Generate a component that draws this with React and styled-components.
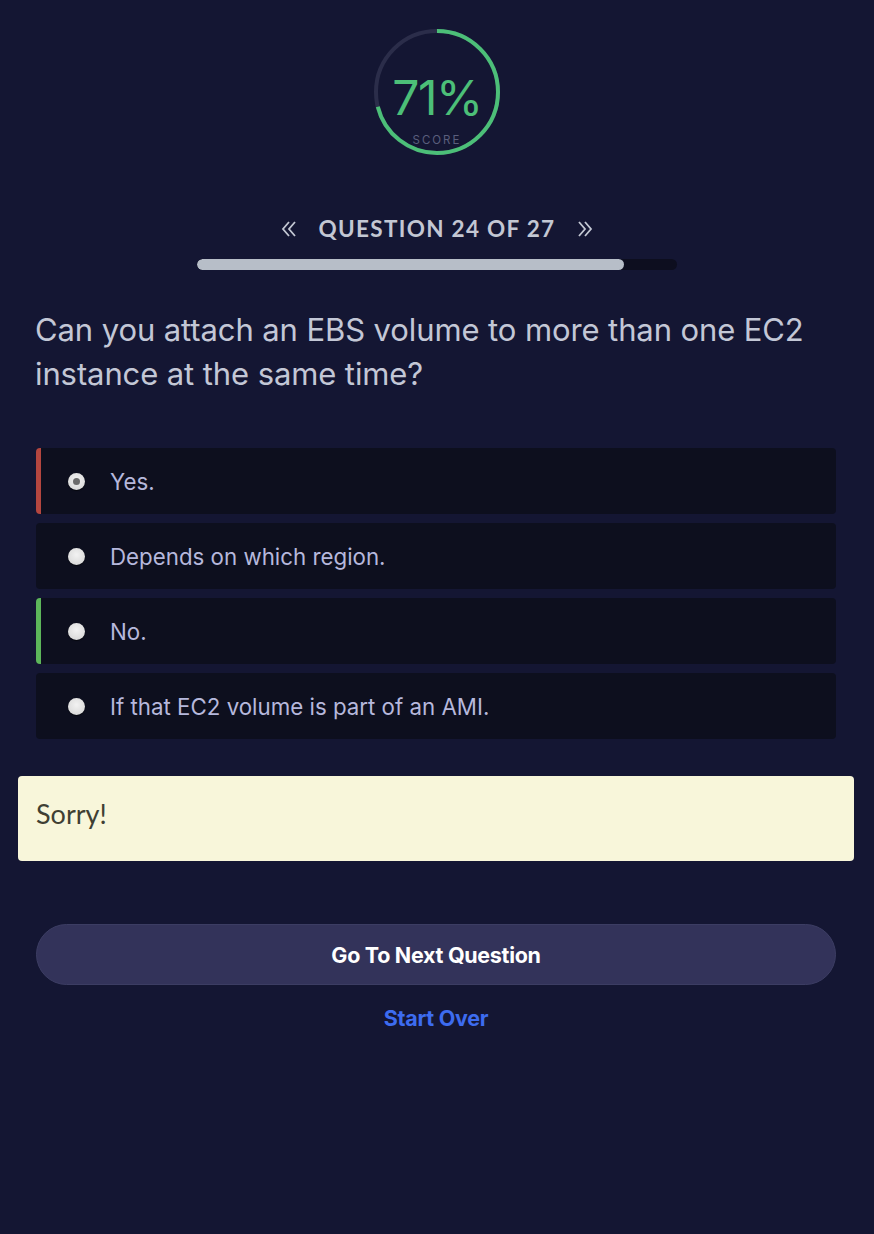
import * as React from 'react';
import styled, { createGlobalStyle } from 'styled-components';

const Global = createGlobalStyle`
  html, body {
    margin: 0;
    padding: 0;
    background: #141633;
  }
`

const Page = styled.div`
  min-height: 1234px;
  background: #141633;
  font-family: Inter, 'Liberation Sans', sans-serif;
  display: flex;
  flex-direction: column;
  align-items: center;
  padding-top: 29px;
  box-sizing: border-box;
`

const Dial = styled.div`
  position: relative;
  width: 126px;
  height: 126px;
`

const DialText = styled.div`
  position: absolute;
  inset: 0;
  display: flex;
  flex-direction: column;
  align-items: center;
  justify-content: center;
`

const Percent = styled.div`
  color: #4cbf78;
  font-family: Inter, 'Liberation Sans', sans-serif;
  font-size: 48px;
  font-weight: 400;
  line-height: 1;
  margin-top: 36px;
  letter-spacing: -1.5px;
`

const ScoreLabel = styled.div`
  color: #5a5e7c;
  font-size: 11.5px;
  letter-spacing: 2px;
  margin-top: 11px;
`

const NavRow = styled.div`
  display: flex;
  align-items: center;
  gap: 22px;
  margin-top: 60px;
  color: #c3c7d3;
`

const NavTitle = styled.div`
  font-family: 'Lato', sans-serif;
  font-weight: 700;
  font-size: 22.5px;
  letter-spacing: 1.3px;
`

const Track = styled.div`
  width: 480px;
  height: 11px;
  border-radius: 6px;
  background: #0d0e1f;
  margin-top: 17px;
  overflow: hidden;
`

const Fill = styled.div`
  height: 100%;
  border-radius: 6px;
  background: #b7bec8;
`

const Body = styled.div`
  align-self: stretch;
  padding: 0 38px 0 36px;
  margin-top: 38px;
`

const Question = styled.h1`
  margin: 0 0 52px -1px;
  font-family: Inter, 'Liberation Sans', sans-serif;
  font-weight: 400;
  font-size: 31px;
  line-height: 44px;
  letter-spacing: -0.1px;
  color: #c3c7d6;
`

const Options = styled.div`
  display: flex;
  flex-direction: column;
  gap: 9px;
`

const Option = styled.div`
  display: flex;
  align-items: center;
  height: 66px;
  background: #0d0f1e;
  border-radius: 4px;
  border-left: 5px solid ${p => p.mark || '#0d0f1e'};
  padding-left: 27px;
  gap: 25px;
  box-sizing: border-box;
`

const Radio = styled.span`
  width: 17px;
  height: 17px;
  flex-shrink: 0;
  border-radius: 50%;
  background: radial-gradient(circle at 50% 40%, #f2f2f2 0%, #dcdcdc 70%, #b5b5b5 100%);
  box-shadow: 0 1px 1px rgba(0,0,0,0.6);
  display: flex;
  align-items: center;
  justify-content: center;
  &::after {
    content: '';
    width: 7px;
    height: 7px;
    border-radius: 50%;
    background: ${p => (p.checked ? '#6b6b6b' : 'transparent')};
  }
`

const OptionText = styled.span`
  font-size: 22.3px;
  color: #b6b8dc;
`

const Alert = styled.div`
  margin: 37px 20px 0 18px;
  background: #f8f6da;
  border-radius: 4px;
  height: 85px;
  box-sizing: border-box;
  padding: 21px 18px;
  font-family: 'Lato', sans-serif;
  font-size: 27px;
  color: #403f33;
  align-self: stretch;
`

const Actions = styled.div`
  align-self: stretch;
  padding: 0 38px 0 36px;
  margin-top: 63px;
  display: flex;
  flex-direction: column;
  align-items: center;
`

const NextButton = styled.button`
  width: 100%;
  height: 61px;
  border-radius: 31px;
  background: #33335a;
  border: 1px solid #3c3d63;
  color: #ffffff;
  font-family: Inter, 'Liberation Sans', sans-serif;
  font-weight: 700;
  font-size: 21.5px;
  letter-spacing: -0.3px;
`

const StartOver = styled.a`
  margin-top: 20px;
  color: #3d6cf0;
  font-weight: 700;
  font-size: 21.5px;
  letter-spacing: -0.3px;
  text-decoration: none;
`

const options = [
  { text: 'Yes.', mark: '#b4463f', checked: true },
  { text: 'Depends on which region.' },
  { text: 'No.', mark: '#5db65a' },
  { text: 'If that EC2 volume is part of an AMI.' },
]

const Chevrons = ({ flip }) => (
  <svg width="16" height="18" viewBox="0 0 16 18"
    style={flip ? { transform: 'scaleX(-1)' } : undefined}>
    <path d="M8 2 L2 9 L8 16 M14 2 L8 9 L14 16" fill="none"
      stroke="#c3c7d3" strokeWidth="1.8" strokeLinejoin="miter" />
  </svg>
)

const ScoreDial = ({ value }) => {
  const r = 61;
  const c = 2 * Math.PI * r;
  return (
    <Dial>
      <svg width="126" height="126" viewBox="0 0 126 126">
        <circle cx="63" cy="63" r={r} fill="none" stroke="#2b2d4a" strokeWidth="4" />
        <circle
          cx="63" cy="63" r={r} fill="none" stroke="#4cbf78" strokeWidth="4"
          strokeDasharray={`${c * value / 100} ${c}`}
          transform="rotate(-90 63 63)"
        />
      </svg>
      <DialText>
        <Percent>{value}%</Percent>
        <ScoreLabel>SCORE</ScoreLabel>
      </DialText>
    </Dial>
  )
}

export default function App() {
  const current = 24, total = 27;
  return (
    <Page>
      <Global />
      <ScoreDial value={71} />
      <NavRow>
        <Chevrons />
        <NavTitle>QUESTION {current} OF {total}</NavTitle>
        <Chevrons flip />
      </NavRow>
      <Track>
        <Fill style={{ width: `${(current / total) * 100}%` }} />
      </Track>
      <Body>
        <Question>Can you attach an EBS volume to more than one EC2 instance at the same time?</Question>
        <Options>
          {options.map(o => (
            <Option key={o.text} mark={o.mark}>
              <Radio checked={o.checked} />
              <OptionText>{o.text}</OptionText>
            </Option>
          ))}
        </Options>
      </Body>
      <Alert>Sorry!</Alert>
      <Actions>
        <NextButton>Go To Next Question</NextButton>
        <StartOver href="#">Start Over</StartOver>
      </Actions>
    </Page>
  )
}
